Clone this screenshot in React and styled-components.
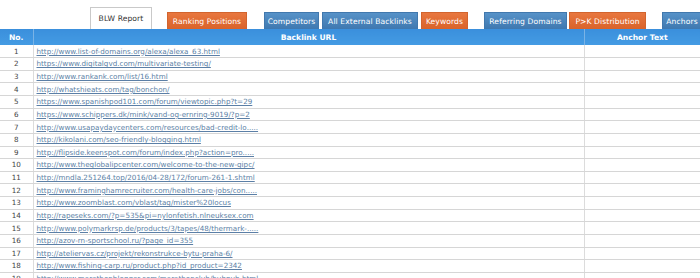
import React from 'react';
import styled, { createGlobalStyle } from 'styled-components';

const tabs = [
  { label: 'BLW Report', kind: 'active', width: 62, left: 90 },
  { label: 'Ranking Positions', kind: 'orange', width: 80, left: 15 },
  { label: 'Competitors', kind: 'blue', width: 55, left: 17 },
  { label: 'All External Backlinks', kind: 'blue', width: 96, left: 3 },
  { label: 'Keywords', kind: 'orange', width: 47, left: 3 },
  { label: 'Referring Domains', kind: 'blue', width: 83, left: 16 },
  { label: 'P>K Distribution', kind: 'orange', width: 77, left: 2 },
  { label: 'Anchors', kind: 'blue', width: 40, left: 16 },
];

const links = [
  'http://www.list-of-domains.org/alexa/alexa_63.html',
  'https://www.digitalgvd.com/multivariate-testing/',
  'http://www.rankank.com/list/16.html',
  'http://whatshieats.com/tag/bonchon/',
  'https://www.spanishpod101.com/forum/viewtopic.php?t=29',
  'https://www.schippers.dk/mink/vand-og-ernring-9019/?p=2',
  'http://www.usapaydaycenters.com/resources/bad-credit-lo.....',
  'http://kikolani.com/seo-friendly-blogging.html',
  'http://flipside.keenspot.com/forum/index.php?action=pro.....',
  'http://www.theglobalipcenter.com/welcome-to-the-new-gipc/',
  'http://mndla.251264.top/2016/04-28/172/forum-261-1.shtml',
  'http://www.framinghamrecruiter.com/health-care-jobs/con.....',
  'http://www.zoomblast.com/vblast/tag/mister%20locus',
  'http://rapeseks.com/?p=535&pi=nylonfetish.nlneuksex.com',
  'http://www.polymarkrsp.de/products/3/tapes/48/thermark-.....',
  'http://azov-rn-sportschool.ru/?page_id=355',
  'http://ateliervas.cz/projekt/rekonstrukce-bytu-praha-6/',
  'http://www.fishing-carp.ru/product.php?id_product=2342',
  'http://www.marathonblogger.com/marathonclub/hubpub.html',
];

const tabColors = {
  active: { bg: '#ffffff', fg: '#333333', border: '#c9c9c9' },
  orange: { bg: 'linear-gradient(#e8773f, #d9632a)', fg: '#ffffff', border: '#d2642e' },
  blue: { bg: 'linear-gradient(#5792c8, #3f78b0)', fg: '#ffffff', border: '#4178ad' },
};

function App() {
  return (
    <Page>
      <GlobalStyle />
      <TabBar>
        {tabs.map((t) => (
          <Tab key={t.label} $kind={t.kind} $width={t.width} $left={t.left}>
            {t.label}
          </Tab>
        ))}
      </TabBar>
      <Table>
        <colgroup>
          <col style={{ width: 33 }} />
          <col style={{ width: 551 }} />
          <col />
        </colgroup>
        <thead>
          <tr>
            <Th>No.</Th>
            <Th>Backlink URL</Th>
            <Th>Anchor Text</Th>
          </tr>
        </thead>
        <tbody>
          {links.map((url, i) => (
            <Row key={url}>
              <NumCell>{i + 1}</NumCell>
              <UrlCell><UrlLink href="#">{url}</UrlLink></UrlCell>
              <Cell />
            </Row>
          ))}
        </tbody>
      </Table>
    </Page>
  );
}

const GlobalStyle = createGlobalStyle`
  html, body {
    margin: 0;
    padding: 0;
    background: #fff;
    overflow: hidden;
  }
`;

const Page = styled.div`
  width: 700px;
  height: 278px;
  overflow: hidden;
  font-family: "DejaVu Sans", Verdana, sans-serif;
`;

const TabBar = styled.div`
  display: flex;
  align-items: flex-end;
  height: 29px;
  white-space: nowrap;
`;

const Tab = styled.div`
  flex: none;
  box-sizing: border-box;
  width: ${(p) => p.$width}px;
  margin-left: ${(p) => p.$left}px;
  height: ${(p) => (p.$kind === 'active' ? 22 : 17)}px;
  display: flex;
  align-items: center;
  justify-content: center;
  font-size: 7.6px;
  letter-spacing: 0.1px;
  color: ${(p) => tabColors[p.$kind].fg};
  background: ${(p) => tabColors[p.$kind].bg};
  border: 1px solid ${(p) => tabColors[p.$kind].border};
  border-bottom: none;
  padding-top: ${(p) => (p.$kind === 'active' ? 0 : 1)}px;
`;

const Table = styled.table`
  width: 700px;
  border-collapse: collapse;
  table-layout: fixed;
`;

const Th = styled.th`
  height: 16px;
  padding: 0;
  background: linear-gradient(#3a8fdc, #449be3);
  color: #ffffff;
  font-size: 7.6px;
  font-weight: bold;
  text-align: center;
  border-left: 1px solid #7ab3e6;
  &:first-child {
    border-left: none;
  }
`;

const Row = styled.tr`
  height: 12.63px;
`;

const Cell = styled.td`
  padding: 0;
  border-bottom: 1px solid #d6d6d6;
  border-left: 1px solid #dcdcdc;
  font-size: 7.2px;
  line-height: 11px;
  white-space: nowrap;
  overflow: hidden;
`;

const NumCell = styled(Cell)`
  border-left: none;
  text-align: center;
  color: #444;
`;

const UrlCell = styled(Cell)`
  padding-left: 3px;
`;

const UrlLink = styled.a`
  color: #5b7fa6;
  text-decoration: underline;
`;

export default App;
